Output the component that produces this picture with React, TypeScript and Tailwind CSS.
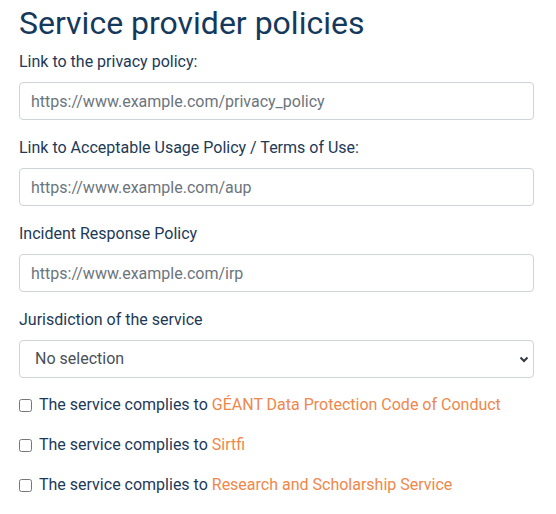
import React from 'react';

const fields = [
  { label: 'Link to the privacy policy:', placeholder: 'https://www.example.com/privacy_policy' },
  { label: 'Link to Acceptable Usage Policy / Terms of Use:', placeholder: 'https://www.example.com/aup' },
  { label: 'Incident Response Policy', placeholder: 'https://www.example.com/irp' },
];

const checks = ['GÉANT Data Protection Code of Conduct', 'Sirtfi', 'Research and Scholarship Service'];

export default function App() {
  return (
    <div className="w-[556px] min-h-[514px] bg-white px-[19px] pt-[4px] text-[16px] leading-6 text-[#1d3a57] font-['Roboto',sans-serif]">
      <h2 className="text-[32px] leading-[1.2] text-[#14395c] mb-2">Service provider policies</h2>

      {fields.map((f) => (
        <div key={f.label} className="mb-4">
          <label className="block mb-2">{f.label}</label>
          <input
            type="text"
            placeholder={f.placeholder}
            className="block w-[515px] h-[38px] px-[11px] rounded border border-[#ced4da] bg-white text-[#495057] placeholder:text-[#6c757d] outline-none"
          />
        </div>
      ))}

      <div className="mb-4">
        <label className="block mb-2">Jurisdiction of the service</label>
        <div className="relative w-[515px]">
          <select className="block w-full h-[38px] pl-[15px] pr-8 rounded border border-[#ced4da] bg-white text-[#495057] appearance-none outline-none">
            <option>No selection</option>
          </select>
          <svg
            className="absolute right-[5px] top-[14px] pointer-events-none"
            width="10"
            height="10"
            viewBox="0 0 10 10"
          >
            <path d="M1.5 3.5 L5 7 L8.5 3.5" fill="none" stroke="#343a40" strokeWidth="2" />
          </svg>
        </div>
      </div>

      <div className="flex flex-col gap-4 -mt-px">
        {checks.map((c) => (
          <label key={c} className="flex items-center gap-[7px]">
            <input type="checkbox" className="w-[13px] h-[13px] m-0" />
            <span>
              The service complies to <a className="text-[#f0874b]">{c}</a>
            </span>
          </label>
        ))}
      </div>
    </div>
  );
}
